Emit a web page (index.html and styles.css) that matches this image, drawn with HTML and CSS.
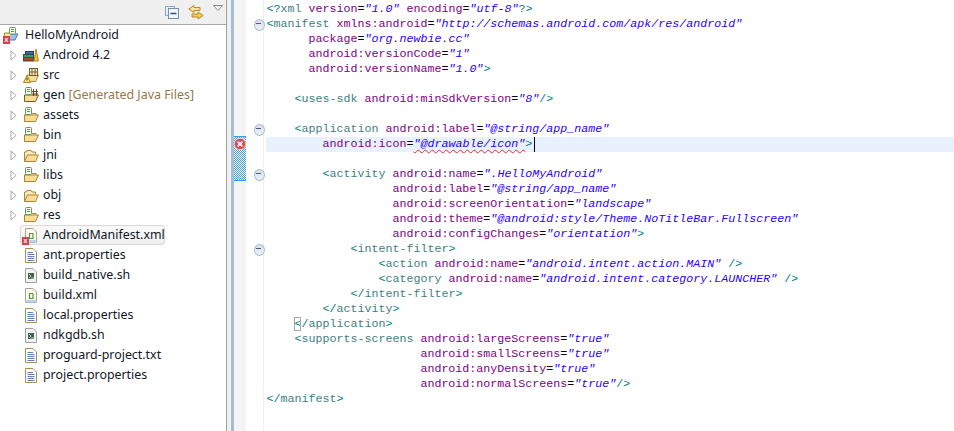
FILE: index.html
```html
<!DOCTYPE html>
<html lang="en">
<head>
<meta charset="utf-8">
<title>HelloMyAndroid</title>
<link rel="stylesheet" href="styles.css">
</head>
<body>
<svg class="defs" width="0" height="0" aria-hidden="true">
  <defs>
    <symbol id="arrow" viewBox="0 0 7 11"><path d="M1 1 L6 5.5 L1 10 Z" fill="#fff" stroke="#a8a8a8"/></symbol>
    <symbol id="folder" viewBox="0 0 16 16">
      <path d="M1.500 14.500 V5 h1.500 l1-1.500 h4 l1 1.500 h3.500 v2.500" fill="#fce9b5" stroke="#a9843a"/>
      <path d="M1.500 14.500 L4.500 8 H15.500 L12.500 14.500 Z" fill="#fbdc94" stroke="#a9843a"/>
    </symbol>
    <symbol id="tag" viewBox="0 0 16 16">
      <path d="M1.500 14.500 V8 h1 V5.500 M9 6.500 h4 v1.500" fill="none" stroke="#a9843a"/>
      <path d="M1.500 14.500 V8 H12.500 l3 0 L12.500 14.500 Z" fill="#fbdc94" stroke="#a9843a"/>
      <rect x="2.500" y="0.500" width="6" height="7" rx="1" fill="#fff" stroke="#5d9a4f"/>
      <path d="M4 2.500 h3 M4 4.500 h3" stroke="#5d9a4f"/>
    </symbol>
    <symbol id="doc" viewBox="0 0 12 15">
      <path d="M0.500 0.500 H8 L11.500 4 V14.500 H0.500 Z" fill="#fff" stroke="#a48e56"/>
      <path d="M2.500 4.500 H8 M2.500 6.500 H9.500 M2.500 8.500 H9.500 M2.500 10.500 H9.500 M2.500 12.500 H9.500" stroke="#5d7fb8"/>
    </symbol>
    <symbol id="shell" viewBox="0 0 12 15">
      <path d="M0.500 0.500 H8 L11.500 4 V14.500 H0.500 Z" fill="#f2f2f2" stroke="#a0a0a0"/>
      <path d="M3 5 h6 v6 h-6 Z" fill="#44604a"/>
      <path d="M4 6 l2 2 l-2 2 M6 10 h3" stroke="#b7dcb0" fill="none"/>
    </symbol>
    <symbol id="xml" viewBox="0 0 12 15">
      <path d="M0.500 0.500 H8 L11.500 4 V14.500 H0.500 Z" fill="#fdfaf0" stroke="#a9a489"/>
      <path d="M0.500 12 H11.500 V14.500 H0.500 Z" fill="#bcd4ea"/>
      <path d="M8 5.500 H4.500 V10.500 H8 V5.500" fill="none" stroke="#4a9a45" stroke-width="1.200"/>
    </symbol>
  </defs>
</svg>

<div class="app">
  <aside class="explorer">
    <header class="view-bar">
      <svg class="tool collapse" viewBox="0 0 14 13" aria-hidden="true">
        <rect x="0.500" y="0.500" width="9" height="9" fill="#e9eef5" stroke="#8da6c4"/>
        <rect x="3.500" y="2.500" width="10" height="10" fill="#f4f7fb" stroke="#6f8fb5"/>
        <path d="M5.500 7.500 H11.500" stroke="#1f4f8f" stroke-width="1.500"/>
      </svg>
      <svg class="tool link" viewBox="0 0 16 15" aria-hidden="true">
        <path d="M6 0.500 L0.800 4 L6 7.500 V5.500 H12 V2.500 H6 Z" fill="#fbe49f" stroke="#b88a1e"/>
        <path d="M10 7 L15.200 10.500 L10 14 V12 H4 V9 H10 Z" fill="#f6cb5e" stroke="#b88a1e"/>
      </svg>
      <svg class="tool menu" viewBox="0 0 10 6" aria-hidden="true"><path d="M0.500 0.500 H9.500 L5 5.500 Z" fill="#f8f8f8" stroke="#8a8a8a"/></svg>
    </header>
    <ul class="tree">
      <li class="row project">
        <span class="project-icon">
          <svg class="ic16" aria-hidden="true" viewBox="0 0 16 16">
            <path d="M1 13 L4 7 H15 L12 13 Z" fill="#9fc0e8" stroke="#5578a8"/>
            <path d="M1.500 12 V6 H8 V8" fill="#fbe49f" stroke="#a9843a"/>
            <rect x="6.500" y="0.500" width="6" height="6.500" rx="1" fill="#fff" stroke="#5d9a4f"/>
            <path d="M8 2.500 h3 M8 4.500 h3" stroke="#5d9a4f"/>
          </svg>
          <span class="err-badge">x</span>
        </span>
        <span class="name">HelloMyAndroid</span>
      </li>
      <li class="row">
        <svg class="tw" aria-hidden="true"><use href="#arrow"/></svg>
        <svg class="ic16" viewBox="0 0 16 16" aria-hidden="true">
          <rect x="0.500" y="10.500" width="10" height="3.500" fill="#a84a2a" stroke="#5c3a2a"/>
          <rect x="0.500" y="7.500" width="10" height="3" fill="#4a9a5a" stroke="#2c5c46"/>
          <rect x="2.500" y="4.500" width="8" height="3" fill="#3c6a9a" stroke="#2c4060"/>
          <path d="M11 14 L13 2 L15.500 14 Z" fill="#f0c040" stroke="#b08820"/>
        </svg>
        <span class="name lib">Android 4.2</span>
      </li>
      <li class="row">
        <svg class="tw" aria-hidden="true"><use href="#arrow"/></svg>
        <span class="icon-wrap">
          <svg class="ic16" viewBox="0 0 16 16" aria-hidden="true">
            <path d="M1.500 14.500 L4.500 8 H15.500 L12.500 14.500 Z" fill="#fbdc94" stroke="#a9843a"/>
            <rect x="6.500" y="1.500" width="8" height="7" fill="#fff2cf" stroke="#7a5a2a"/>
            <path d="M9 1.500 V8.500 M12 1.500 V8.500 M6.500 5 H14.500" stroke="#7a5a2a"/>
          </svg>
          <svg class="warn" viewBox="0 0 8 8" aria-hidden="true"><path d="M4 0.500 L7.500 7.500 H0.500 Z" fill="#fce26a" stroke="#a88a20"/><path d="M4 3 V5.500" stroke="#333"/></svg>
        </span>
        <span class="name">src</span>
      </li>
      <li class="row">
        <svg class="tw" aria-hidden="true"><use href="#arrow"/></svg>
        <svg class="ic16" viewBox="0 0 16 16" aria-hidden="true">
          <path d="M1.500 14.500 V8 H15.500 L12.500 14.500 Z" fill="#fbdc94" stroke="#7a5a2a"/>
          <rect x="2.500" y="0.500" width="6" height="7" rx="1" fill="#fff" stroke="#5d9a4f"/>
          <path d="M4 2.500 h3 M4 4.500 h3" stroke="#5d9a4f"/>
          <path d="M10.500 2 V9 M13.500 2 V9 M9 4.500 H15 M9 7 H15" stroke="#6a4a20"/>
        </svg>
        <span class="name">gen <span class="decor">[Generated Java Files]</span></span>
      </li>
      <li class="row"><svg class="tw" aria-hidden="true"><use href="#arrow"/></svg><svg class="ic16" aria-hidden="true"><use href="#tag"/></svg><span class="name">assets</span></li>
      <li class="row"><svg class="tw" aria-hidden="true"><use href="#arrow"/></svg><svg class="ic16" aria-hidden="true"><use href="#tag"/></svg><span class="name">bin</span></li>
      <li class="row"><svg class="tw" aria-hidden="true"><use href="#arrow"/></svg><svg class="ic16" aria-hidden="true"><use href="#folder"/></svg><span class="name">jni</span></li>
      <li class="row"><svg class="tw" aria-hidden="true"><use href="#arrow"/></svg><svg class="ic16" aria-hidden="true"><use href="#tag"/></svg><span class="name">libs</span></li>
      <li class="row"><svg class="tw" aria-hidden="true"><use href="#arrow"/></svg><svg class="ic16" aria-hidden="true"><use href="#folder"/></svg><span class="name">obj</span></li>
      <li class="row"><svg class="tw" aria-hidden="true"><use href="#arrow"/></svg><svg class="ic16" aria-hidden="true"><use href="#tag"/></svg><span class="name">res</span></li>
      <li class="row file selected">
        <span class="icon-wrap file-wrap">
          <svg class="ic-file" aria-hidden="true"><use href="#xml"/></svg>
          <span class="err-badge">x</span>
        </span>
        <span class="name">AndroidManifest.xml</span>
      </li>
      <li class="row file"><svg class="ic-file" aria-hidden="true"><use href="#doc"/></svg><span class="name">ant.properties</span></li>
      <li class="row file"><svg class="ic-file" aria-hidden="true"><use href="#shell"/></svg><span class="name">build_native.sh</span></li>
      <li class="row file"><svg class="ic-file" aria-hidden="true"><use href="#xml"/></svg><span class="name">build.xml</span></li>
      <li class="row file"><svg class="ic-file" aria-hidden="true"><use href="#doc"/></svg><span class="name">local.properties</span></li>
      <li class="row file"><svg class="ic-file" aria-hidden="true"><use href="#shell"/></svg><span class="name">ndkgdb.sh</span></li>
      <li class="row file"><svg class="ic-file" aria-hidden="true"><use href="#doc"/></svg><span class="name">proguard-project.txt</span></li>
      <li class="row file"><svg class="ic-file" aria-hidden="true"><use href="#doc"/></svg><span class="name">project.properties</span></li>
    </ul>
  </aside>

  <div class="sash"></div>

  <main class="editor">
    <div class="annotations">
      <div class="problem">
        <svg class="problem-icon" viewBox="0 0 12 12" aria-hidden="true">
          <circle cx="6" cy="6" r="5.700" fill="#dc4a52" stroke="#f7dede" stroke-width="0.700"/>
          <path d="M3.600 3.600 L8.400 8.400 M8.400 3.600 L3.600 8.400" stroke="#fff" stroke-width="1.700"/>
        </svg>
      </div>
    </div>
    <div class="folds">
      <div class="fold-slot"></div>
      <div class="fold-slot fold"></div>
      <div class="fold-gap-6"></div>
      <div class="fold-slot fold"></div>
      <div class="fold-gap-2"></div>
      <div class="fold-slot fold"></div>
      <div class="fold-gap-4"></div>
      <div class="fold-slot fold"></div>
    </div>
    <div class="code">
<div class="ln"><span class="t">&lt;?</span><span class="n">xml</span> <span class="a">version</span>=<span class="s">"1.0"</span> <span class="a">encoding</span>=<span class="s">"utf-8"</span><span class="t">?&gt;</span></div>
<div class="ln"><span class="t">&lt;</span><span class="n">manifest</span> <span class="a">xmlns:android</span>=<span class="s">"http://schemas.android.com/apk/res/android"</span></div>
<div class="ln">      <span class="a">package</span>=<span class="s">"org.newbie.cc"</span></div>
<div class="ln">      <span class="a">android:versionCode</span>=<span class="s">"1"</span></div>
<div class="ln">      <span class="a">android:versionName</span>=<span class="s">"1.0"</span><span class="t">&gt;</span></div>
<div class="ln"> </div>
<div class="ln">    <span class="t">&lt;</span><span class="n">uses-sdk</span> <span class="a">android:minSdkVersion</span>=<span class="s">"8"</span><span class="t">/&gt;</span></div>
<div class="ln"> </div>
<div class="ln">    <span class="t">&lt;</span><span class="n">application</span> <span class="a">android:label</span>=<span class="s">"@string/app_name"</span></div>
<div class="ln current">        <span class="a">android:icon</span>=<span class="s bad">"@drawable/icon"</span><span class="t">&gt;</span><span class="caret"></span></div>
<div class="ln"> </div>
<div class="ln">        <span class="t">&lt;</span><span class="n">activity</span> <span class="a">android:name</span>=<span class="s">".HelloMyAndroid"</span></div>
<div class="ln">                  <span class="a">android:label</span>=<span class="s">"@string/app_name"</span></div>
<div class="ln">                  <span class="a">android:screenOrientation</span>=<span class="s">"landscape"</span></div>
<div class="ln">                  <span class="a">android:theme</span>=<span class="s">"@android:style/Theme.NoTitleBar.Fullscreen"</span></div>
<div class="ln">                  <span class="a">android:configChanges</span>=<span class="s">"orientation"</span><span class="t">&gt;</span></div>
<div class="ln">            <span class="t">&lt;</span><span class="n">intent-filter</span><span class="t">&gt;</span></div>
<div class="ln">                <span class="t">&lt;</span><span class="n">action</span> <span class="a">android:name</span>=<span class="s">"android.intent.action.MAIN"</span> <span class="t">/&gt;</span></div>
<div class="ln">                <span class="t">&lt;</span><span class="n">category</span> <span class="a">android:name</span>=<span class="s">"android.intent.category.LAUNCHER"</span> <span class="t">/&gt;</span></div>
<div class="ln">            <span class="t">&lt;/</span><span class="n">intent-filter</span><span class="t">&gt;</span></div>
<div class="ln">        <span class="t">&lt;/</span><span class="n">activity</span><span class="t">&gt;</span></div>
<div class="ln">    <span class="t"><span class="match">&lt;</span>/</span><span class="n">application</span><span class="t">&gt;</span></div>
<div class="ln">    <span class="t">&lt;</span><span class="n">supports-screens</span> <span class="a">android:largeScreens</span>=<span class="s">"true"</span></div>
<div class="ln">                      <span class="a">android:smallScreens</span>=<span class="s">"true"</span></div>
<div class="ln">                      <span class="a">android:anyDensity</span>=<span class="s">"true"</span></div>
<div class="ln">                      <span class="a">android:normalScreens</span>=<span class="s">"true"</span><span class="t">/&gt;</span></div>
<div class="ln"><span class="t">&lt;/</span><span class="n">manifest</span><span class="t">&gt;</span></div>
    </div>
  </main>
</div>
</body>
</html>
```
FILE: styles.css
```css
* { box-sizing: border-box; }
html, body { margin: 0; height: 100%; }
body { width: 954px; height: 431px; overflow: hidden; background: #fff; }
.defs { position: absolute; }

.app { display: flex; height: 431px; }

/* Package explorer */
.explorer { width: 226px; flex: none; background: #fff; display: flex; flex-direction: column; font: 12.4px/20px "Noto Sans", "Open Sans", sans-serif; color: #101828; }
.view-bar { height: 25px; flex: none; background: #f0f0f0; border-bottom: 1px solid #a9a9a9; display: flex; align-items: flex-start; padding: 5px 0 0 165px; }
.tool { display: block; flex: none; }
.collapse { width: 14px; height: 13px; margin-top: 1px; }
.link { width: 16px; height: 15px; margin-left: 9px; }
.menu { width: 10px; height: 6px; margin-left: 9px; }

.tree { list-style: none; margin: 0; padding: 0; }
.row { height: 20px; display: flex; align-items: center; white-space: nowrap; padding-left: 10px; }
.row.project { padding-left: 3px; }
.row.file { padding-left: 25px; }
.tw { width: 7px; height: 11px; flex: none; margin-right: 6px; }
.ic16 { width: 16px; height: 16px; flex: none; display: block; }
.ic-file { width: 12px; height: 15px; flex: none; display: block; }
.name { margin-left: 4px; }
.project .name { margin-left: 6px; }
.file .name { margin-left: 6px; }
.decor { color: #95794a; }

.project-icon, .icon-wrap { position: relative; display: block; flex: none; }
.file-wrap { width: 12px; height: 15px; }
.err-badge { position: absolute; left: 0; bottom: -1px; width: 7px; height: 8px; background: #d8404a; color: #fff; font: bold 7px/7px "Liberation Sans", sans-serif; text-align: center; }
.project-icon .err-badge { bottom: -1px; left: 0; }
.file-wrap .err-badge { left: -3px; bottom: -2px; }
.warn { position: absolute; left: 0; bottom: 0; width: 8px; height: 8px; }
.row.selected { margin-left: 20px; width: 145px; padding-left: 4px; background: linear-gradient(#fafafa, #f0f0f0); border: 1px solid #d9d9d9; border-radius: 3px; }
.row.selected .name { margin-left: 6px; }

/* Sash */
.sash { width: 8px; flex: none; background: #f0f0f0; border-left: 1px solid #a0a0a0; border-right: 3px solid #a5bdd8; }

/* Editor */
.editor { flex: 1; display: flex; background: #fff; min-width: 0; }
.annotations { width: 12px; flex: none; background: #f4f4f4; padding-top: 136px; }
.problem { height: 45px; background-color: #fff; background-image: conic-gradient(#3f9cf0 25%, #fff 0 50%, #3f9cf0 0 75%, #fff 0); background-size: 2px 2px; border-top: 1px solid #3399ff; border-bottom: 1px solid #3399ff; }
.problem-icon { display: block; width: 12px; height: 12px; margin-top: 1px; }
.folds { width: 18px; flex: none; padding-top: 2px; border-right: 1px solid #efefef; }
.fold-slot { height: 15px; }
.fold-gap-6 { height: 90px; }
.fold-gap-2 { height: 30px; }
.fold-gap-4 { height: 60px; }
.fold { position: relative; }
.fold::after { content: ""; position: absolute; left: 8px; top: 2px; width: 9px; height: 10px; border-radius: 50%; background: linear-gradient(#d5dfe9, #eef2f6); border: 1px solid #a9bccf; }
.fold::before { content: ""; position: absolute; z-index: 1; left: 10px; top: 6px; width: 5px; height: 1px; background: #4a6078; }

.code { flex: 1; min-width: 0; padding-top: 2px; padding-left: 2px; font: 11.67px/15px "Liberation Mono", "DejaVu Sans Mono", monospace; color: #000; }
.ln { height: 15px; white-space: pre; padding-left: 0.5px; }
.ln.current { background: #e8f2fe; }
.t { color: #008080; }
.n { color: #3f7f7f; }
.a { color: #7f007f; }
.s { color: #2a00ff; font-style: italic; }
.bad { text-decoration: underline wavy #e03030 1px; text-underline-offset: 2px; }
.match { outline: 1px solid #a8a8a8; outline-offset: -1px; }
.caret { display: inline-block; width: 0; height: 15px; border-left: 1px solid #000; margin-left: 2px; vertical-align: top; }
```
